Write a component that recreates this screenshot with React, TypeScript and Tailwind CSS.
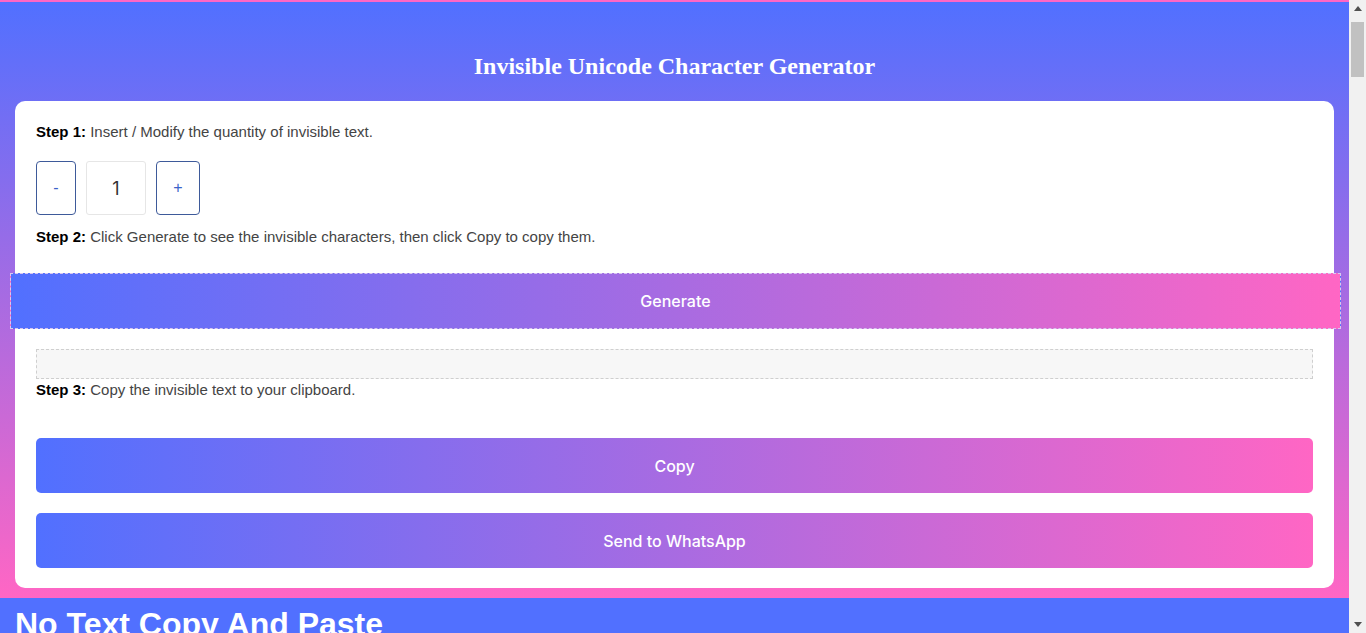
// Invisible Unicode Character Generator — single static page.

const gradientBtn =
  "bg-[linear-gradient(90deg,#5170ff,#ff66c4)] text-white text-[16px] font-[Inter,sans-serif] font-medium";

function Step({ n, children }: { n: number; children: React.ReactNode }) {
  return (
    <p className="h-5 text-[15px] leading-5 text-[#444]">
      <b className="text-black">Step {n}:</b> {children}
    </p>
  );
}

function Scrollbar() {
  return (
    <div className="flex h-full w-[17px] shrink-0 flex-col items-center bg-[#f1f1f1]">
      <div className="flex h-[17px] w-full items-center justify-center">
        <svg width="8" height="5" viewBox="0 0 8 5">
          <path d="M0 5 L4 0 L8 5 Z" fill="#505050" />
        </svg>
      </div>
      <div className="mt-[5px] h-[55px] w-[13px] bg-[#c1c1c1]" />
      <div className="flex-1" />
      <div className="flex h-[17px] w-full items-center justify-center">
        <svg width="8" height="5" viewBox="0 0 8 5">
          <path d="M0 0 L8 0 L4 5 Z" fill="#505050" />
        </svg>
      </div>
    </div>
  );
}

export default function App() {
  return (
    <div className="flex h-[633px] w-full overflow-hidden font-['Liberation_Sans',Arial,sans-serif]">
      <main className="flex min-w-0 flex-1 flex-col">
        <div className="h-[2px] shrink-0 bg-[#ff66c4]" />
        <section className="shrink-0 bg-[linear-gradient(180deg,#5170ff,#ff66c4)] px-[15px] pb-[10px]">
          <h1 className="pt-[51px] pb-[21px] text-center font-['Liberation_Serif','Times_New_Roman',serif] text-[24px] font-bold leading-[27px] text-white">
            Invisible Unicode Character Generator
          </h1>
          <div className="rounded-[10px] bg-white px-[21px] pt-[21px] pb-[20px]">
            <Step n={1}>Insert / Modify the quantity of invisible text.</Step>

            <div className="mt-[19px] flex gap-[10px]">
              <button className="flex h-[54px] w-[40px] items-center justify-center rounded-[4px] border border-[#3e5a9a] bg-white text-[16px] text-[#3a62c9]">
                -
              </button>
              <div className="flex h-[54px] w-[60px] items-center justify-center rounded-[3px] border border-[#e6e6e6] bg-white font-[Inter,sans-serif] text-[18px] text-[#333]">
                1
              </div>
              <button className="flex h-[54px] w-[44px] items-center justify-center rounded-[4px] border border-[#3e5a9a] bg-white text-[16px] text-[#3a62c9]">
                +
              </button>
            </div>

            <div className="mt-[12px]">
              <Step n={2}>Click Generate to see the invisible characters, then click Copy to copy them.</Step>
            </div>

            <button
              className={`-ml-[26px] mt-[26px] flex h-[56px] w-[calc(100%+54px)] items-center justify-center border border-dashed border-[#d8c8ee] ${gradientBtn}`}
            >
              Generate
            </button>

            <div className="mt-[20px] h-[30px] border border-dashed border-[#cfcfcf] bg-[#f7f7f7]" />

            <div className="mt-px">
              <Step n={3}>Copy the invisible text to your clipboard.</Step>
            </div>

            <button
              className={`mt-[38px] flex h-[55px] w-full items-center justify-center rounded-[5px] ${gradientBtn}`}
            >
              Copy
            </button>
            <button
              className={`mt-[20px] flex h-[55px] w-full items-center justify-center rounded-[5px] ${gradientBtn}`}
            >
              Send to WhatsApp
            </button>
          </div>
        </section>
        <section className="flex-1 bg-[#5170ff] px-[15px] pt-[8px]">
          <h2 className="text-[32px] font-bold leading-[37px] text-white">No Text Copy And Paste</h2>
        </section>
      </main>
      <Scrollbar />
    </div>
  );
}
